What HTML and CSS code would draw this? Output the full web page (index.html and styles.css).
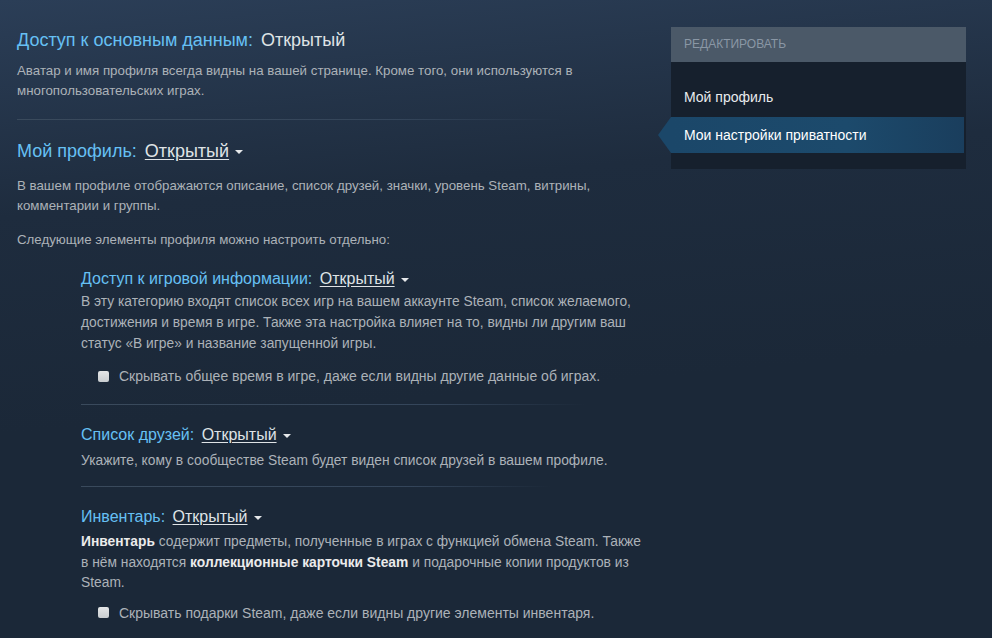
FILE: index.html
```html
<!DOCTYPE html>
<html>
    <head>
        <title>Настройки приватности</title>
        <link rel="stylesheet" href="styles.css">
    </head>
    <body>
        <div class="page">
            <div class="settings">
                <div class="section">
                    <div class="heading">Доступ к основным данным: <span class="value">Открытый</span></div>
                    <p class="desc">Аватар и имя профиля всегда видны на вашей странице. Кроме того, они используются в многопользовательских играх.</p>
                </div>
                <div class="divider"></div>

                <div class="section">
                    <div class="heading">Мой профиль: <span class="value link">Открытый</span><span class="caret"></span></div>
                    <p class="desc desc-top">В вашем профиле отображаются описание, список друзей, значки, уровень Steam, витрины, комментарии и группы.</p>
                    <p class="desc desc-note">Следующие элементы профиля можно настроить отдельно:</p>
                </div>

                <div class="subsections">
                    <div class="sub">
                        <div class="sub-heading">Доступ к игровой информации: <span class="value link">Открытый</span><span class="caret"></span></div>
                        <p class="sub-desc">В эту категорию входят список всех игр на вашем аккаунте Steam, список желаемого, достижения и время в игре. Также эта настройка влияет на то, видны ли другим ваш статус «В игре» и название запущенной игры.</p>
                        <label class="check"><span class="box"></span>Скрывать общее время в игре, даже если видны другие данные об играх.</label>
                    </div>
                    <div class="divider sub-divider"></div>

                    <div class="sub">
                        <div class="sub-heading">Список друзей: <span class="value link">Открытый</span><span class="caret"></span></div>
                        <p class="sub-desc single">Укажите, кому в сообществе Steam будет виден список друзей в вашем профиле.</p>
                    </div>
                    <div class="divider sub-divider short"></div>

                    <div class="sub">
                        <div class="sub-heading">Инвентарь: <span class="value link">Открытый</span><span class="caret"></span></div>
                        <p class="sub-desc inventory"><b>Инвентарь</b> содержит предметы, полученные в играх с функцией обмена Steam. Также в нём находятся <b>коллекционные карточки Steam</b> и подарочные копии продуктов из Steam.</p>
                        <label class="check"><span class="box"></span>Скрывать подарки Steam, даже если видны другие элементы инвентаря.</label>
                    </div>
                </div>
            </div>

            <div class="sidebar">
                <div class="sidebar-title">Редактировать</div>
                <div class="sidebar-body">
                    <a class="nav-item">Мой профиль</a>
                    <a class="nav-item active">Мои настройки приватности</a>
                </div>
            </div>
        </div>
    </body>
</html>
```

FILE: styles.css
```css
html, body {
    margin: 0;
    height: 100%;
}

body {
    background: #1b2839 linear-gradient(175deg, #2b3e57 0%, #1e2c3e 30%, #1b2838 60%);
    font-family: "Liberation Sans", Arial, sans-serif;
    color: #acb2b8;
    overflow: hidden;
}

.page {
    display: flex;
    align-items: flex-start;
    padding: 29px 0 0 17px;
}

.settings {
    width: 629px;
    flex-shrink: 0;
}

.heading {
    font-size: 18px;
    line-height: 22px;
    color: #66c0f4;
}

.value {
    color: #dfe3e6;
    margin-left: 3px;
}

.link {
    text-decoration: underline;
    text-underline-offset: 2px;
}

.caret {
    display: inline-block;
    width: 0;
    height: 0;
    margin-left: 6px;
    vertical-align: middle;
    border-left: 4px solid transparent;
    border-right: 4px solid transparent;
    border-top: 4px solid #e6e8ea;
}

.desc {
    margin: 10px 0 0;
    font-size: 13.3px;
    line-height: 20px;
}

.desc-top {
    margin-top: 14px;
}

.desc-note {
    margin-top: 14px;
}

.divider {
    height: 1px;
    width: 545px;
    margin: 18px 0 20px;
    background: linear-gradient(90deg, #3a4a5c 0%, #34455a 70%, rgba(52, 69, 90, 0) 100%);
}

.subsections {
    padding-left: 64px;
    margin-top: 19px;
}

.sub-heading {
    font-size: 16px;
    line-height: 20px;
    color: #66c0f4;
}

.sub-desc {
    margin: 3px 0 0;
    font-size: 13.8px;
    line-height: 20.8px;
}

.sub-desc.single {
    margin-top: 6px;
}

.sub-desc.inventory {
    margin-top: 5px;
    line-height: 20.5px;
}

.sub-desc b {
    color: #ebebeb;
    font-weight: bold;
}

.check {
    display: flex;
    align-items: center;
    margin: 12px 0 0 17px;
    font-size: 14px;
    line-height: 20px;
}

.inventory + .check {
    margin-top: 9px;
}

.box {
    width: 11px;
    height: 11px;
    border-radius: 2px;
    margin-right: 10px;
    background: linear-gradient(#e4e6e7, #c9cdd0);
}

.sub-divider {
    width: 505px;
    margin: 18px 0 20px;
}

.short {
    width: 470px;
    margin-top: 14px;
}

.sidebar {
    width: 295px;
    margin: -2px 0 0 25px;
    background: #16202d;
}

.sidebar-title {
    height: 35px;
    line-height: 35px;
    padding-left: 13px;
    background: #4b5968;
    color: #8a97a5;
    font-size: 12px;
    text-transform: uppercase;
}

.sidebar-body {
    padding: 17px 2px 16px 0;
}

.nav-item {
    position: relative;
    display: block;
    height: 36px;
    line-height: 36px;
    padding-left: 13px;
    font-size: 14px;
    color: #e8ebee;
}

.nav-item + .nav-item {
    margin-top: 2px;
}

.nav-item.active {
    background: linear-gradient(90deg, #1b4769 0%, #1c4a6c 60%, #1a3e5d 100%);
    color: #ffffff;
}

.nav-item.active::before {
    content: "";
    position: absolute;
    left: -13px;
    top: 0;
    border-top: 18px solid transparent;
    border-bottom: 18px solid transparent;
    border-right: 13px solid #1b4769;
}
```
